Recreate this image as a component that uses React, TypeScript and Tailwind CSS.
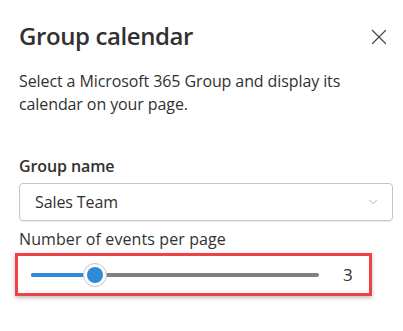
import { X, ChevronDown } from 'lucide-react';

export default function App() {
    return (
        <div className="w-[403px] h-[331px] bg-white text-[#323130] font-['Open_Sans',sans-serif] overflow-hidden">
            <div className="pl-[19px] pr-[15px] pt-[19px]">
                {/* Header */}
                <div className="flex items-center justify-between h-[34px]">
                    <h1 className="text-[24px] font-semibold leading-[34px] tracking-[-0.4px]">Group calendar</h1>
                    <button className="w-[26px] h-[26px] mr-[-4px] mt-[2px] flex items-center justify-center text-[#484644]">
                        <X className="w-[26px] h-[26px]" strokeWidth={1.1} />
                    </button>
                </div>

                <p className="mt-[17px] text-[16px] leading-[23px] w-[370px] tracking-[-0.1px]">
                    Select a Microsoft 365 Group and display its calendar on your page.
                </p>

                {/* Group name */}
                <label className="block mt-[39px] text-[16px] font-semibold leading-[22px] tracking-[-0.1px]">Group name</label>
                <div className="mt-[6px] w-[374px] h-[38px] rounded-[4px] border border-[#c8c6c4] shadow-[0_1px_1px_rgba(0,0,0,0.08)] flex items-center justify-between pl-[15px] pr-[12px]">
                    <span className="text-[16px] tracking-[-0.1px]">Sales Team</span>
                    <ChevronDown className="w-[14px] h-[14px] text-[#a19f9d]" strokeWidth={1.3} />
                </div>

                {/* Slider */}
                <label className="block mt-[7px] text-[16px] leading-[22px] tracking-[0.1px]">Number of events per page</label>
                <div className="ml-[-4px] mt-[3px] w-[357px] h-[43px] border-[3px] border-[#ef4146] shadow-[0_2px_4px_rgba(0,0,0,0.25)] flex items-center pl-[13px]">
                    <div className="relative w-[288px] h-[4px] rounded-full bg-[#808080]">
                        <div className="absolute left-0 top-0 h-[4px] w-[64px] rounded-full bg-[#2f8ad8]" />
                        <div className="absolute left-[52px] top-[-10px] w-[24px] h-[24px] rounded-full bg-white border border-[#c8c6c4] flex items-center justify-center">
                            <div className="w-[16px] h-[16px] rounded-full bg-[#2f8ad8]" />
                        </div>
                    </div>
                    <span className="ml-[24px] text-[17px] leading-none">3</span>
                </div>
            </div>
        </div>
    );
}
